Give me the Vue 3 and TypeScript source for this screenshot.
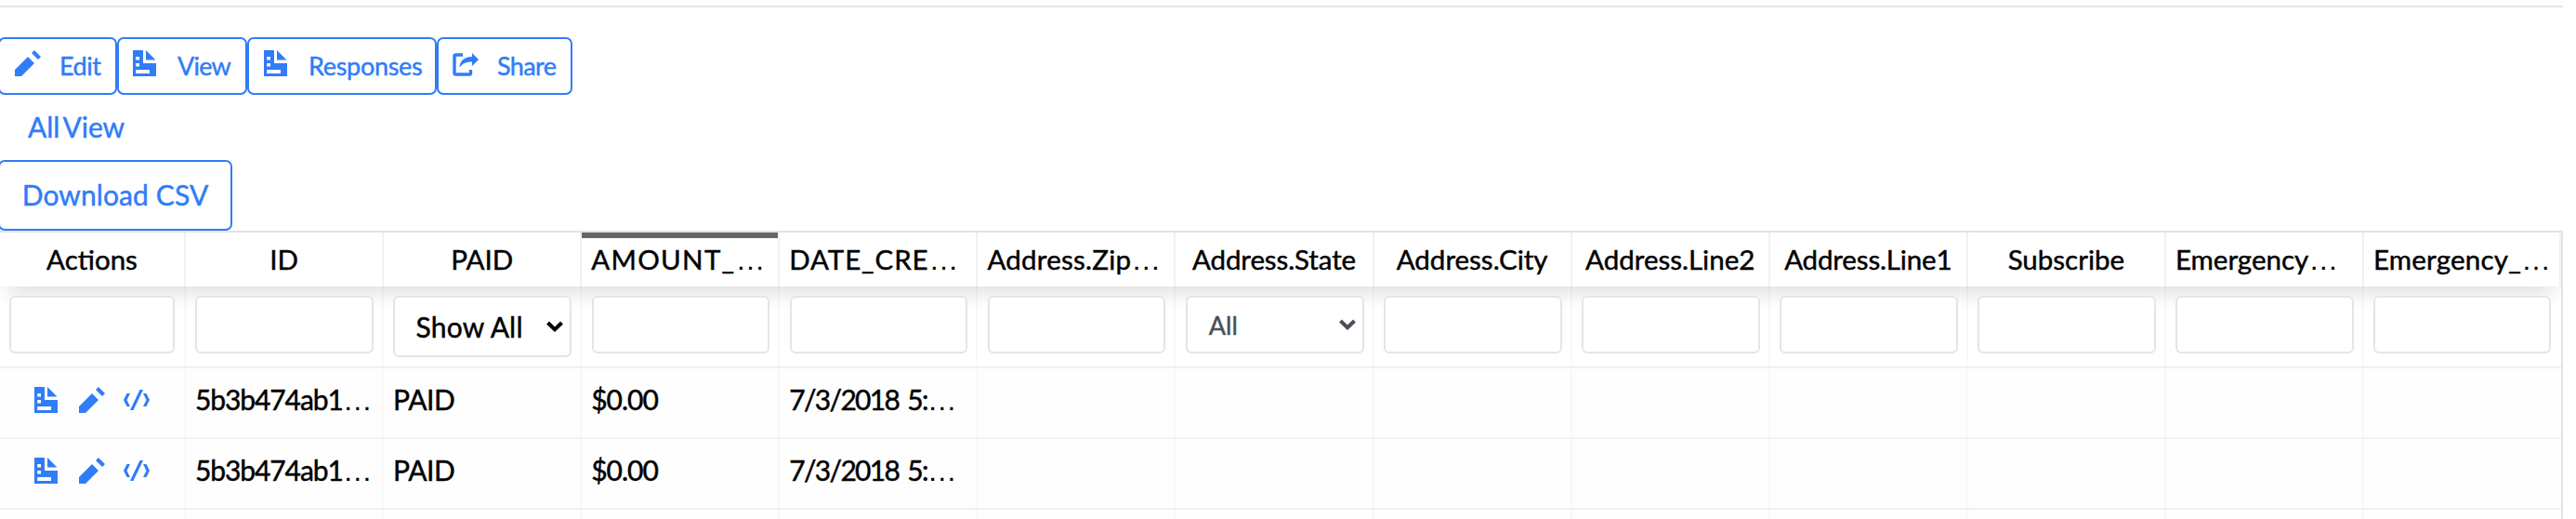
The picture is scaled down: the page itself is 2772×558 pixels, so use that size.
<script setup lang="ts">
interface Column {
  title: string
  filter: 'text' | 'paid' | 'all'
  cut?: boolean
  sorted?: boolean
}

const columns: Column[] = [
  { title: 'Actions', filter: 'text' },
  { title: 'ID', filter: 'text' },
  { title: 'PAID', filter: 'paid' },
  { title: 'AMOUNT_', cut: true, filter: 'text', sorted: true },
  { title: 'DATE_CRE', cut: true, filter: 'text' },
  { title: 'Address.Zip', cut: true, filter: 'text' },
  { title: 'Address.State', filter: 'all' },
  { title: 'Address.City', filter: 'text' },
  { title: 'Address.Line2', filter: 'text' },
  { title: 'Address.Line1', filter: 'text' },
  { title: 'Subscribe', filter: 'text' },
  { title: 'Emergency', cut: true, filter: 'text' },
  { title: 'Emergency_', cut: true, filter: 'text' },
]

interface Value {
  text: string
  cut?: boolean
}

const record: Value[] = [
  { text: '5b3b474ab1', cut: true },
  { text: 'PAID' },
  { text: '$0.00' },
  { text: '7/3/2018 5:', cut: true },
]
const rows: Value[][] = [record, record]
const emptyCells = columns.length - 5
</script>

<template>
  <div class="page">
    <svg width="0" height="0" class="defs">
      <symbol id="doc" viewBox="0 0 25 28">
        <path fill-rule="evenodd" d="M0 0H11V14H25V28H0ZM3.200 7V10.500H7V7ZM3.200 14V17.500H7V14ZM3.200 21V25H18V21Z" />
        <path d="M14 0L24.500 10.500H14Z" />
      </symbol>
      <symbol id="pencil" viewBox="0 0 28 28">
        <path d="M0 28V21L14 7L21 14L7 28ZM18 3L21 0L28 7L25 10Z" />
      </symbol>
      <symbol id="code" viewBox="0 0 28 22">
        <path d="M3.500 4H7L3.500 11L7 18H3.500L0 11ZM21 4H24.500L28 11L24.500 18H21L24.500 11ZM17.500 0H21L10.500 22H7Z" />
      </symbol>
      <symbol id="share" viewBox="0 0 28 25">
        <path d="M11 2H3.500Q2 2 2 3.500V21.500Q2 23 3.500 23H18Q19.500 23 19.500 21.500V18" fill="none" stroke="currentColor" stroke-width="3.400" />
        <path d="M7.500 15.500C8 8 13 4 21 4V0L28 7L21 14V9.500C15 9.500 11 11 7.500 15.500Z" />
      </symbol>
    </svg>
    <hr class="rule" />
    <nav class="toolbar">
      <button class="btn b1"><svg class="i28"><use href="#pencil" /></svg><span>Edit</span></button>
      <button class="btn b2"><svg class="i25"><use href="#doc" /></svg><span>View</span></button>
      <button class="btn b3"><svg class="i25"><use href="#doc" /></svg><span>Responses</span></button>
      <button class="btn b4"><svg class="ishare"><use href="#share" /></svg><span>Share</span></button>
    </nav>
    <a class="all-view">All View</a>
    <button class="download">Download CSV</button>
    <section class="table">
      <div class="row head">
        <div v-for="(c, i) in columns" :key="c.title" class="cell" :class="['h' + i, { sorted: c.sorted, cut: c.cut }]">
          <span>{{ c.title }}<i v-if="c.cut" class="dots">…</i></span>
        </div>
      </div>
      <div class="row filters">
        <div v-for="c in columns" :key="c.title" class="cell">
          <div class="field" :class="c.filter">
            <template v-if="c.filter !== 'text'">
              <span>{{ c.filter === 'paid' ? 'Show All' : 'All' }}</span>
              <svg class="chev" viewBox="0 0 18 12"><path d="M1.500 2L9 9.200L16.500 2" /></svg>
            </template>
          </div>
        </div>
      </div>
      <div v-for="(r, i) in rows" :key="i" class="row data">
        <div class="cell actions">
          <svg class="i25"><use href="#doc" /></svg>
          <svg class="i28"><use href="#pencil" /></svg>
          <svg class="icode"><use href="#code" /></svg>
        </div>
        <div v-for="(v, j) in r" :key="j" class="cell" :class="'d' + j"><span>{{ v.text }}<i v-if="v.cut" class="dots">…</i></span></div>
        <div v-for="n in emptyCells" :key="'e' + n" class="cell"></div>
      </div>
      <div class="row data">
        <div v-for="c in columns" :key="c.title" class="cell"></div>
      </div>
    </section>
  </div>
</template>

<style>
body { background: #fff; }
</style>

<style scoped>
.page { width: 2772px; height: 558px; overflow: hidden; font-family: Lato, "Liberation Sans", sans-serif; color: #000; -webkit-text-stroke: .45px currentColor; }
.page * { box-sizing: border-box; }
.defs { display: block; }
svg { fill: currentColor; flex: none; }
.rule { margin: 6px 0 0; border: 0; height: 2px; width: 2758px; background: #e5e5e5; }
.toolbar { display: flex; margin: 32px 0 0 -2px; }
button { font: inherit; background: #fff; color: #317cf7; border: 2px solid #317cf7; border-radius: 7px; padding: 0; white-space: nowrap; }
.btn { height: 62px; display: flex; align-items: flex-start; font-size: 27px; letter-spacing: -.3px; padding: 12px 0 0 16px; }
.btn span { line-height: 34px; margin-left: 23px; }
.i28 { width: 28px; height: 28px; }
.i25 { width: 25px; height: 28px; }
.icode { width: 28px; height: 22px; }
.ishare { width: 28px; height: 25px; margin-top: 3px; }
.b1 { width: 128px; }
.b1 span { margin-left: 20px; letter-spacing: -.5px; }
.b2 { width: 140px; padding-left: 15px; }
.b2 span { letter-spacing: -.8px; }
.b3 { width: 204px; }
.b4 { width: 146px; padding-left: 15px; }
.b4 span { margin-left: 20px; letter-spacing: -.6px; }
.all-view { display: block; height: 70px; line-height: 69px; padding-left: 30px; font-size: 30px; letter-spacing: -.1px; word-spacing: -3px; color: #317cf7; }
.download { display: block; margin-left: -2px; padding-bottom: 3px; width: 252px; height: 76px; font-size: 30px; letter-spacing: .1px; }
.table { width: 2758px; height: 312px; overflow: hidden; border-top: 2px solid #e3e3e3; border-right: 2px solid #e3e3e3; }
.row { display: grid; grid-template-columns: 200px repeat(11, 213.1px) 1fr; }
.cell { border-right: 2px solid #f8f8f8; white-space: nowrap; padding: 0 10px; min-width: 0; }
.cell:last-child { border-right-color: transparent; }
.head { height: 58px; position: relative; background: #fff; box-shadow: 0 16px 20px -8px rgba(0, 0, 0, .12); }
.head .cell { display: flex; justify-content: center; font-size: 29.500px; line-height: 58px; border-right-color: #f1f1f1; }
.head .cut { justify-content: flex-start; }
.head .sorted { background: linear-gradient(#666 6px, transparent 6px) padding-box; }
.head .h3 { letter-spacing: 1.300px; }
.head .h4 { letter-spacing: .9px; }
.head .h5 { letter-spacing: .25px; }
.head .h6 { letter-spacing: -.1px; }
.head .h9 { letter-spacing: -.15px; }
.head .h12 { letter-spacing: .2px; }
.dots { font: normal 32px/1 "Liberation Sans", sans-serif; letter-spacing: 0; -webkit-text-stroke: 0; }
.filters { height: 88px; border-bottom: 2px solid #f1f1f1; }
.filters .cell { padding: 10px 9px 0 10.400px; }
.filters .cell:first-child { padding: 10px 10px 0; }
.field { display: flex; position: relative; justify-content: space-between; align-items: center; height: 62px; border: 2px solid #e5e5e5; border-radius: 6px; background: #fff; }
.paid { height: 66px; font-size: 30px; letter-spacing: .2px; padding: 0 7px 0 22px; }
.all { font-size: 27px; color: #495057; padding: 0 7px 0 23px; }
.chev { width: 18px; height: 12px; fill: none; stroke: currentColor; stroke-width: 4; }
.data { height: 76px; border-bottom: 2px solid #f1f1f1; background: #fefefe; }
.data .cell { font-size: 30px; line-height: 67px; }
.data .d0 { letter-spacing: -1.100px; }
.data .d1 { letter-spacing: -.4px; }
.data .d2 { letter-spacing: -1px; }
.data .d3 { letter-spacing: -1.700px; word-spacing: 3px; }
.data .actions { display: flex; align-items: center; padding: 0 0 6px 37px; color: #317cf7; }
.actions .i28 { margin: 0 20px 0 23px; }
</style>
